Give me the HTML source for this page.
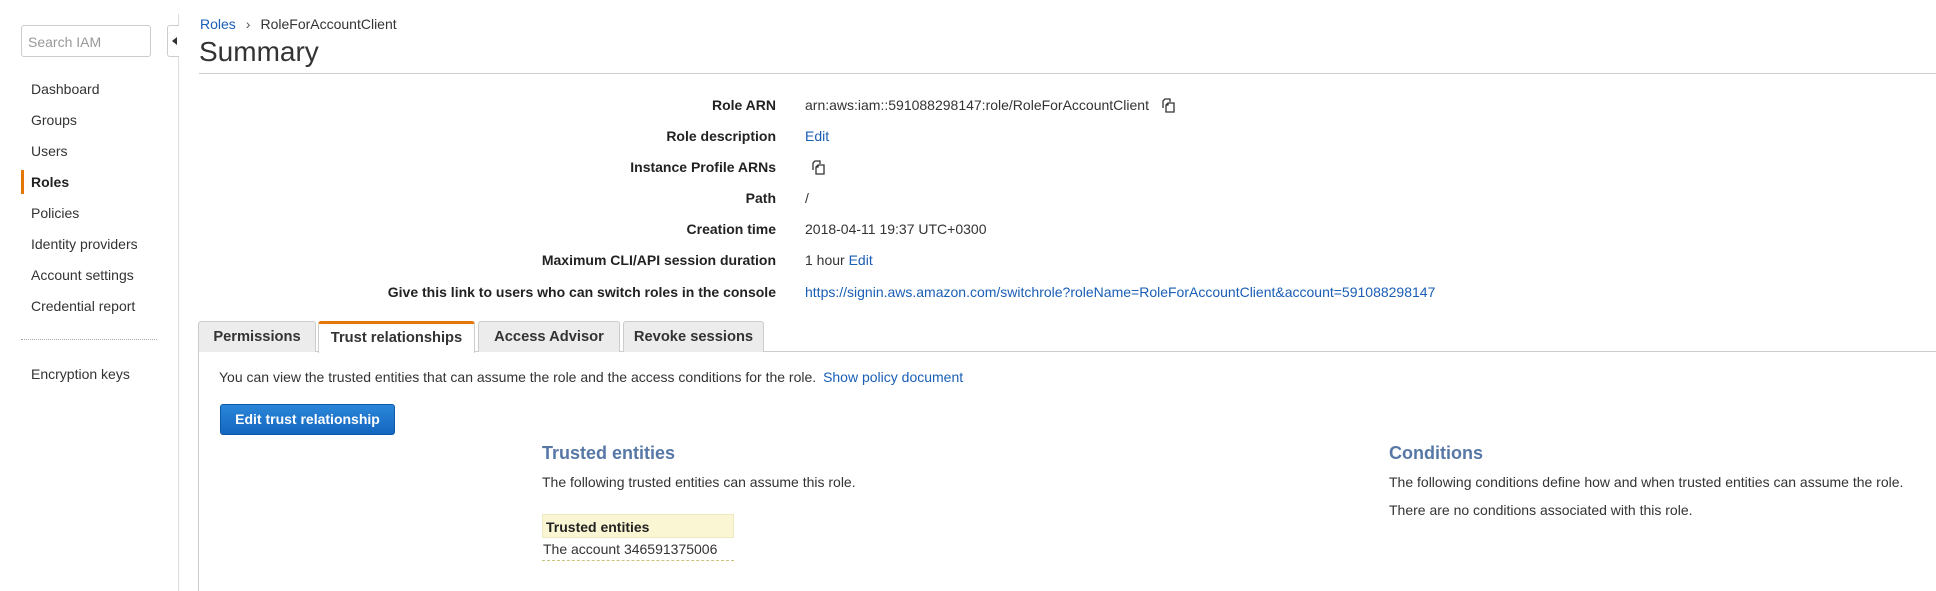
<!DOCTYPE html>
<html><head><meta charset="utf-8"><style>
*{margin:0;padding:0;box-sizing:border-box}
body{width:1936px;height:591px;background:#fff;font-family:"Liberation Sans",Arial,sans-serif;font-size:14px;color:#333;position:relative;overflow:hidden}
.a{position:absolute;white-space:nowrap}
.lnk{color:#1a5eb5}
.nav{left:31px;font-size:14px;color:#333}
.lab{right:1160px;font-weight:bold;text-align:right;color:#222}
.val{left:805px}
.tab{position:absolute;top:321px;height:31px;background:#ececec;border:1px solid #ccc;border-bottom:none;border-radius:3px 3px 0 0;font-weight:bold;font-size:14.7px;color:#333;text-align:center;line-height:30px}
.h{font-weight:bold;font-size:18px;color:#5778a6}
svg.cp{vertical-align:-3px}
</style></head><body>
<!-- sidebar -->
<div class="a" style="left:21px;top:25px;width:130px;height:32px;border:1px solid #ccc;border-radius:3px;"></div>
<div class="a" style="left:28px;top:34px;font-size:14px;color:#999">Search IAM</div>
<div class="a" style="left:178px;top:14px;width:1px;height:577px;background:#ddd"></div>
<div class="a" style="left:167px;top:25px;width:12px;height:32px;border:1px solid #ccc;border-right:none;border-radius:3px 0 0 3px;background:#fff"></div>
<div class="a" style="left:172px;top:37px;width:0;height:0;border-top:4px solid transparent;border-bottom:4px solid transparent;border-right:5px solid #333"></div>
<div class="a nav" style="top:81px">Dashboard</div>
<div class="a nav" style="top:112px">Groups</div>
<div class="a nav" style="top:143px">Users</div>
<div class="a" style="left:21px;top:170px;width:3px;height:24px;background:#e7760a"></div>
<div class="a nav" style="top:174px;font-weight:bold;color:#222">Roles</div>
<div class="a nav" style="top:205px">Policies</div>
<div class="a nav" style="top:236px">Identity providers</div>
<div class="a nav" style="top:267px">Account settings</div>
<div class="a nav" style="top:298px">Credential report</div>
<div class="a" style="left:21px;top:339px;width:136px;border-top:1px dotted #aaa"></div>
<div class="a nav" style="top:366px">Encryption keys</div>
<!-- header -->
<div class="a" style="left:200px;top:16px;font-size:14px"><span class="lnk">Roles</span><span style="color:#555;margin:0 10px">›</span>RoleForAccountClient</div>
<div class="a" style="left:199px;top:36px;font-size:28px;color:#333">Summary</div>
<div class="a" style="left:199px;top:73px;width:1737px;height:1px;background:#ccc"></div>
<!-- details -->
<div class="a lab" style="top:97px">Role ARN</div>
<div class="a val" style="top:97px">arn:aws:iam::591088298147:role/RoleForAccountClient <svg class="cp" style="margin-left:8px" width="15" height="15" viewBox="0 0 15 15" fill="none" stroke="#333" stroke-width="1.3"><path d="M2 10V3l2-2h5v3"/><path d="M5 14V7l2-2h6v9z"/><path d="M5 7h2V5"/></svg></div>
<div class="a lab" style="top:128px">Role description</div>
<div class="a val lnk" style="top:128px">Edit</div>
<div class="a lab" style="top:159px">Instance Profile ARNs</div>
<div class="a val" style="top:159px;left:811px"><svg class="cp" width="15" height="15" viewBox="0 0 15 15" fill="none" stroke="#333" stroke-width="1.3"><path d="M2 10V3l2-2h5v3"/><path d="M5 14V7l2-2h6v9z"/><path d="M5 7h2V5"/></svg></div>
<div class="a lab" style="top:190px">Path</div>
<div class="a val" style="top:190px">/</div>
<div class="a lab" style="top:221px">Creation time</div>
<div class="a val" style="top:221px">2018-04-11 19:37 UTC+0300</div>
<div class="a lab" style="top:252px">Maximum CLI/API session duration</div>
<div class="a val" style="top:252px">1 hour <span class="lnk">Edit</span></div>
<div class="a lab" style="top:284px">Give this link to users who can switch roles in the console</div>
<div class="a val lnk" style="top:284px">https://signin.aws.amazon.com/switchrole?roleName=RoleForAccountClient&amp;account=591088298147</div>
<!-- tabs -->
<div class="a" style="left:198px;top:351px;width:1738px;height:1px;background:#ccc"></div>
<div class="a" style="left:198px;top:351px;width:1px;height:240px;background:#ccc"></div>
<div class="tab" style="left:198px;width:118px">Permissions</div>
<div class="tab" style="left:318px;width:157px;height:32px;background:#fff;border-top:3px solid #e7760a;line-height:28px">Trust relationships</div>
<div class="tab" style="left:478px;width:142px">Access Advisor</div>
<div class="tab" style="left:623px;width:141px">Revoke sessions</div>
<!-- content -->
<div class="a" style="left:219px;top:369px">You can view the trusted entities that can assume the role and the access conditions for the role. <span class="lnk" style="margin-left:3px">Show policy document</span></div>
<div class="a" style="left:220px;top:404px;width:175px;height:31px;border-radius:3px;background:linear-gradient(#2a86d9,#1466bf);border:1px solid #0f5aa8;color:#fff;font-weight:bold;text-align:center;line-height:29px">Edit trust relationship</div>
<div class="a h" style="left:542px;top:443px">Trusted entities</div>
<div class="a" style="left:542px;top:474px">The following trusted entities can assume this role.</div>
<div class="a" style="left:542px;top:514px;width:192px;height:24px;background:#faf6d3;border:1px solid #efe9c0;font-weight:bold;padding:4px 3px;color:#222">Trusted entities</div>
<div class="a" style="left:543px;top:541px">The account 346591375006</div>
<div class="a" style="left:542px;top:560px;width:192px;border-top:1px dashed #c8c47a"></div>
<div class="a h" style="left:1389px;top:443px">Conditions</div>
<div class="a" style="left:1389px;top:474px">The following conditions define how and when trusted entities can assume the role.</div>
<div class="a" style="left:1389px;top:502px">There are no conditions associated with this role.</div>
</body></html>
